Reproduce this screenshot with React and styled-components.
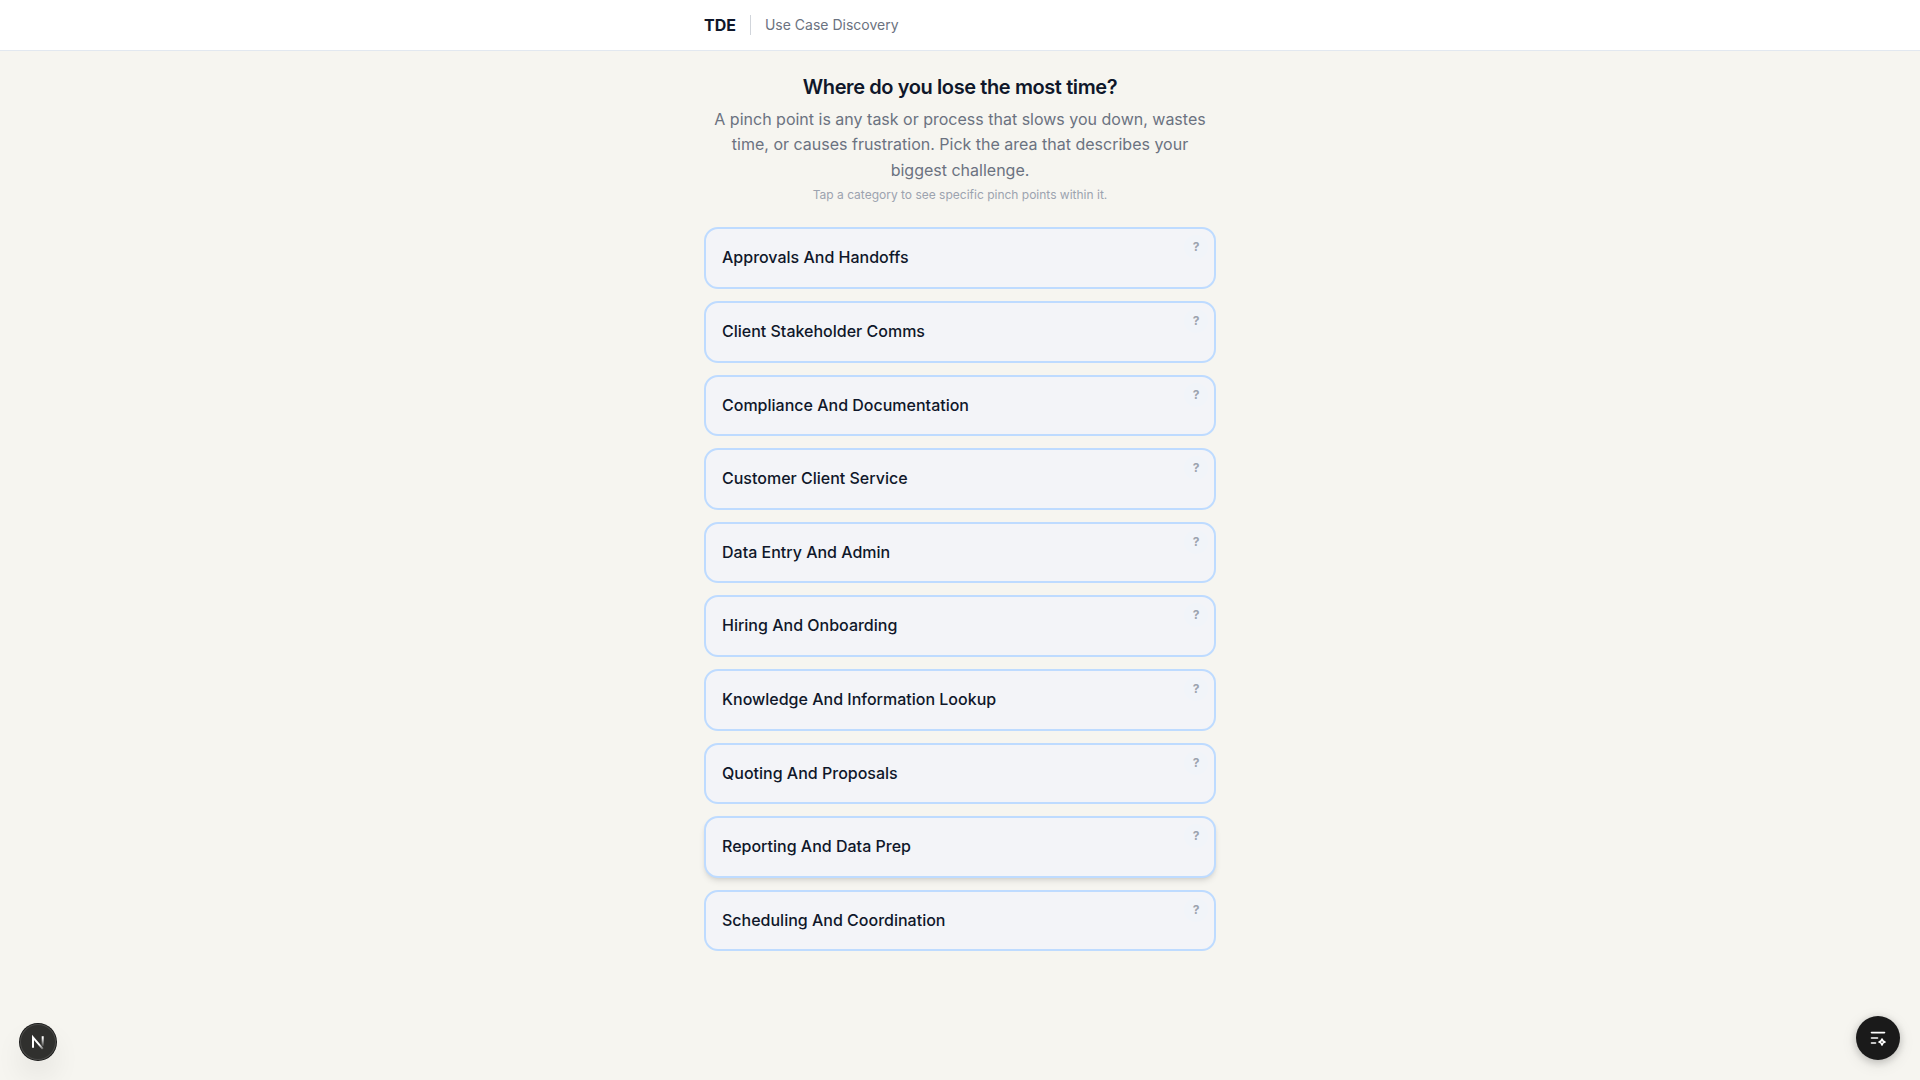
import React, { useState } from 'react';
import styled, { createGlobalStyle } from 'styled-components';

const categories = [
  'Approvals And Handoffs',
  'Client Stakeholder Comms',
  'Compliance And Documentation',
  'Customer Client Service',
  'Data Entry And Admin',
  'Hiring And Onboarding',
  'Knowledge And Information Lookup',
  'Quoting And Proposals',
  'Reporting And Data Prep',
  'Scheduling And Coordination'
];

const GlobalStyle = createGlobalStyle`
  *, *::before, *::after {
    box-sizing: border-box;
  }
  body {
    margin: 0;
    background: #f6f5f0;
    color: #0f172a;
    font-family: Inter, 'Liberation Sans', sans-serif;
    font-size: 16px;
    line-height: 1.6;
    -webkit-font-smoothing: antialiased;
  }
  h1, p, ul {
    margin: 0;
    padding: 0;
  }
  button {
    font: inherit;
    color: inherit;
    cursor: pointer;
  }
`;

const Header = styled.header`
  background: #fff;
  border-bottom: 1px solid #e2e8f0;
`;

const Container = styled.div`
  max-width: 544px;
  margin: 0 auto;
  padding: 0 16px;
`;

const Bar = styled(Container)`
  display: flex;
  align-items: center;
  gap: 14px;
  min-height: calc(1.6em + 24px);
`;

const Brand = styled.span`
  line-height: 20px;
  font-weight: 700;
`;

const Divider = styled.span`
  width: 1px;
  height: 20px;
  background: #d1d5db;
`;

const Product = styled.span`
  font-size: 14px;
  color: #6b7280;
`;

const Main = styled(Container)`
  padding-top: 24px;
  padding-bottom: 96px;
`;

const Intro = styled.div`
  margin-bottom: 24px;
  text-align: center;
`;

const Title = styled.h1`
  margin-bottom: 8px;
  font-size: 20px;
  line-height: 24px;
  font-weight: 600;
  letter-spacing: -0.02em;
`;

const Lead = styled.p`
  margin-bottom: 4px;
  color: #6b7280;
`;

const Hint = styled.p`
  font-size: 12px;
  line-height: 16px;
  color: #9ca3af;
`;

const List = styled.ul`
  display: flex;
  flex-direction: column;
  gap: 12px;
  list-style: none;
`;

const Item = styled.li`
  position: relative;
`;

const Card = styled.button`
  display: block;
  width: 100%;
  padding: 16px;
  border: 2px solid #bedbff;
  border-radius: 14px;
  background: #f3f4f8;
  font-weight: 500;
  text-align: left;
  box-shadow: ${({ $raised }) =>
    $raised
      ? '0 4px 6px -1px rgba(0, 0, 0, 0.1), 0 2px 4px -2px rgba(0, 0, 0, 0.1)'
      : 'none'};
`;

const HelpButton = styled.button`
  position: absolute;
  top: 8px;
  right: 8px;
  width: 24px;
  height: 24px;
  padding: 0;
  border: 0;
  border-radius: 50%;
  background: #f1f4f9;
  color: #9ca3af;
  font-size: 12px;
  line-height: 24px;
  font-weight: 700;
`;

const RoundButton = styled.button`
  position: fixed;
  display: flex;
  align-items: center;
  justify-content: center;
  padding: 0;
  border: 0;
  border-radius: 50%;
`;

const DevButton = styled(RoundButton)`
  left: 20px;
  bottom: 20px;
  width: 36px;
  height: 36px;
  background: #30302e;
  box-shadow: 0 0 0 1px #171717, inset 0 0 0 1px #4a4a48,
    0 16px 32px -8px rgba(0, 0, 0, 0.24);
`;

const FeedbackButton = styled(RoundButton)`
  right: 20px;
  bottom: 20px;
  width: 44px;
  height: 44px;
  background: #1a1a1a;
  box-shadow: 0 2px 8px rgba(0, 0, 0, 0.2), 0 4px 16px rgba(0, 0, 0, 0.1);
`;

const NextIcon = () => (
  <svg width="36" height="36" viewBox="0 0 36 36" fill="none" aria-hidden="true">
    <defs>
      <linearGradient id="stem" x1="0" y1="14" x2="0" y2="23" gradientUnits="userSpaceOnUse">
        <stop stopColor="#fff" />
        <stop offset="1" stopColor="#fff" stopOpacity="0" />
      </linearGradient>
      <linearGradient id="slash" x1="20" y1="20" x2="24" y2="25" gradientUnits="userSpaceOnUse">
        <stop stopColor="#fff" />
        <stop offset="1" stopColor="#fff" stopOpacity="0.2" />
      </linearGradient>
    </defs>
    <path d="M13 23.8V13.4L22.8 24.9" stroke="url(#slash)" strokeWidth="2" />
    <path d="M22.7 12.2V22" stroke="url(#stem)" strokeWidth="2" />
  </svg>
);

const ListSparkleIcon = () => (
  <svg width="24" height="24" viewBox="0 0 24 24" fill="none" aria-hidden="true">
    <g stroke="#fff" strokeWidth="1.6" strokeLinecap="round" strokeLinejoin="round">
      <path d="M5.5 6.6h13" />
      <path d="M5.5 12h6" />
      <path d="M5.5 17h4" />
      <path d="M16 13c.4 1.8 1.2 2.6 3 3-1.8.4-2.6 1.2-3 3-.4-1.8-1.2-2.6-3-3 1.8-.4 2.6-1.2 3-3z" />
    </g>
  </svg>
);

const App = () => {
  const [active, setActive] = useState('Reporting And Data Prep');

  return (
    <>
      <GlobalStyle />
      <Header>
        <Bar>
          <Brand>TDE</Brand>
          <Divider />
          <Product>Use Case Discovery</Product>
        </Bar>
      </Header>

      <Main as="main">
        <Intro>
          <Title>Where do you lose the most time?</Title>
          <Lead>
            A pinch point is any task or process that slows you down, wastes
            time, or causes frustration. Pick the area that describes your
            biggest challenge.
          </Lead>
          <Hint>Tap a category to see specific pinch points within it.</Hint>
        </Intro>

        <List>
          {categories.map(name => (
            <Item key={name} onMouseEnter={() => setActive(name)}>
              <Card type="button" $raised={name === active}>
                {name}
              </Card>
              <HelpButton type="button" aria-label={`About ${name}`}>
                ?
              </HelpButton>
            </Item>
          ))}
        </List>
      </Main>

      <DevButton type="button" aria-label="Open dev tools">
        <NextIcon />
      </DevButton>
      <FeedbackButton type="button" aria-label="Open feedback">
        <ListSparkleIcon />
      </FeedbackButton>
    </>
  );
};

export default App;
